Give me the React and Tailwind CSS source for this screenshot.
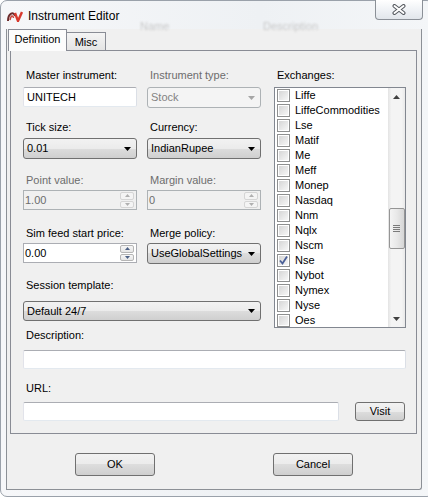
import React from 'react';

const exchanges = [
  'Liffe', 'LiffeCommodities', 'Lse', 'Matif', 'Me', 'Meff', 'Monep', 'Nasdaq',
  'Nnm', 'Nqlx', 'Nscm', 'Nse', 'Nybot', 'Nymex', 'Nyse', 'Oes',
];

function Arrow({ color = '#000', up = false }) {
  return (
    <svg width="7" height="4" viewBox="0 0 7 4">
      <path d={up ? 'M0 4 L3.5 0 L7 4 Z' : 'M0 0 L7 0 L3.5 4 Z'} fill={color} />
    </svg>
  );
}

function Label({ children, disabled, className = '' }) {
  return (
    <div className={`h-[16px] pl-[3px] leading-[16px] ${disabled ? 'text-[#6d6d6d]' : 'text-black'} ${className}`}>
      {children}
    </div>
  );
}

function Combo({ value, disabled, className = '' }) {
  return (
    <div
      className={`relative flex items-center rounded-[3px] border ${
        disabled
          ? 'border-[#adb2b5] bg-[#f4f4f4] text-[#838383]'
          : 'border-[#707070] bg-[linear-gradient(#f2f2f2,#ebebeb_50%,#dddddd_50%,#cfcfcf)] text-black'
      } ${className}`}
    >
      <span className="pl-[3px]">{value}</span>
      <span className="absolute right-[5px] top-1/2 -translate-y-1/2 flex">
        <Arrow color={disabled ? '#a6a6a6' : '#000'} />
      </span>
    </div>
  );
}

function TextBox({ value, className = '' }) {
  return (
    <div className={`flex items-center border border-[#abadb3] border-l-[#e2e3ea] border-r-[#dbdfe6] border-b-[#e3e9ef] bg-white rounded-[2px] pl-[3px] ${className}`}>
      {value}
    </div>
  );
}

function Numeric({ value, disabled }) {
  const btn = disabled
    ? 'border-[#d5d5d5] bg-[#f4f4f4]'
    : 'border-[#b5b5b5] bg-[linear-gradient(#f6f6f6,#e6e6e6)]';
  const arrow = disabled ? '#b0b0b0' : '#4d6185';
  return (
    <div
      className={`relative flex items-center h-[20px] w-[114px] border pl-[1px] ${
        disabled ? 'border-[#adb2b5] bg-[#f0f0f0] text-[#6d6d6d]' : 'border-[#abadb3] bg-white text-black'
      }`}
    >
      {value}
      <div className="absolute right-[2px] top-[1px] bottom-[1px] w-[14px] flex flex-col gap-[1px]">
        <div className={`flex-1 border rounded-[2px] flex items-center justify-center ${btn}`}>
          <svg width="5" height="3" viewBox="0 0 5 3"><path d="M0 3 L2.5 0 L5 3 Z" fill={arrow} /></svg>
        </div>
        <div className={`flex-1 border rounded-[2px] flex items-center justify-center ${btn}`}>
          <svg width="5" height="3" viewBox="0 0 5 3"><path d="M0 0 L5 0 L2.5 3 Z" fill={arrow} /></svg>
        </div>
      </div>
    </div>
  );
}

function WinButton({ children, className = '' }) {
  return (
    <div
      className={`flex items-center justify-center rounded-[3px] border border-[#707070] bg-[linear-gradient(#f2f2f2,#ebebeb_50%,#dddddd_50%,#cfcfcf)] text-black ${className}`}
    >
      {children}
    </div>
  );
}

function CheckBox({ checked }) {
  return (
    <div className="w-[13px] h-[13px] border border-[#8e8f8f] bg-white p-[1px] shrink-0">
      <div className="relative w-full h-full bg-[linear-gradient(135deg,#d6d6d6,#f6f6f6)]">
        {checked && (
          <svg className="absolute -left-[1px] -top-[1px]" width="11" height="11" viewBox="0 0 11 11">
            <path d="M2 5.5 L4.5 8.5 L9 1.5" fill="none" stroke="#4a5f97" strokeWidth="1.8" />
          </svg>
        )}
      </div>
    </div>
  );
}

function Logo() {
  return (
    <svg width="16" height="12" viewBox="0 0 16 12">
      <path d="M1 11 C1 3 7 1 8 6" fill="none" stroke="#6b2a2a" strokeWidth="2" />
      <path d="M3 10 C4 5 6 5 6.5 8" fill="none" stroke="#c8463e" strokeWidth="1.5" />
      <path d="M8 3 L11 11 L15 2" fill="none" stroke="#d83a2e" strokeWidth="2.4" />
    </svg>
  );
}

export default function App() {
  return (
    <div className="w-[428px] h-[500px] bg-white overflow-hidden font-['Liberation_Sans',Arial,sans-serif] text-[11px]">
      <div className="relative w-[434px] h-[497px] rounded-[7px] border border-[#9aa1aa] bg-[linear-gradient(90deg,#f6f7f9,#eef1f4_60%,#f4f6f8)]">
        {/* title bar */}
        <div className="h-[28px] flex items-center pl-[6px] pt-[1px] relative">
          <Logo />
          <span className="ml-[5px] text-[12px] text-black">Instrument Editor</span>
          <span className="absolute left-[139px] top-[17px] text-[#c8c8c8] blur-[1px]">Name</span>
          <span className="absolute left-[262px] top-[17px] text-[#c8c8c8] blur-[1px]">Description</span>
          <div className="absolute -top-[1px] left-[374px] w-[48px] h-[20px] rounded-b-[4px] border border-t-0 border-[#8b9097] bg-[linear-gradient(#ffffff,#edf0f4_60%,#e2e6eb)] flex items-center justify-center">
            <svg width="14" height="11" viewBox="0 0 14 11">
              <path d="M2.5 2 L11.5 9 M11.5 2 L2.5 9" stroke="#55595f" strokeWidth="4" strokeLinecap="round" />
              <path d="M2.5 2 L11.5 9 M11.5 2 L2.5 9" stroke="#ffffff" strokeWidth="2" strokeLinecap="round" />
            </svg>
          </div>
        </div>

        {/* client area */}
        <div className="ml-[5px] w-[416px] h-[461px] border-l border-r border-b border-[#8c9096] bg-[#f0f0f0] rounded-br-[3px]">
          {/* tabs */}
          <div className="flex items-end h-[21px] pl-[1px]">
            <div className="relative z-10 h-[22px] w-[59px] -mb-[1px] border border-b-0 border-[#898c95] bg-[#fcfcfc] flex items-center justify-center pb-[2px]">
              Definition
            </div>
            <div className="h-[18px] w-[39px] border border-l-0 border-b-0 border-[#898c95] bg-[linear-gradient(#f4f4f4,#e4e4e4)] flex items-center justify-center pt-[1px]">
              Misc
            </div>
          </div>

          {/* tab page */}
          <div className="ml-[3px] w-[407px] h-[384px] border border-[#898c95] bg-[#f0f0f0] pl-[12px] pt-[16px]">
            <div className="flex">
              <div className="w-[238px]">
                <div className="flex gap-[10px]">
                  <div className="w-[114px]">
                    <Label>Master instrument:</Label>
                    <TextBox value="UNITECH" className="mt-[4px] h-[20px]" />
                  </div>
                  <div className="w-[114px]">
                    <Label disabled>Instrument type:</Label>
                    <Combo value="Stock" disabled className="mt-[4px] h-[21px]" />
                  </div>
                </div>
                <div className="flex gap-[10px] mt-[11px]">
                  <div className="w-[114px]">
                    <Label>Tick size:</Label>
                    <Combo value="0.01" className="mt-[3px] h-[21px]" />
                  </div>
                  <div className="w-[114px]">
                    <Label>Currency:</Label>
                    <Combo value="IndianRupee" className="mt-[3px] h-[21px]" />
                  </div>
                </div>
                <div className="flex gap-[10px] mt-[13px]">
                  <div className="w-[114px]">
                    <Label disabled>Point value:</Label>
                    <div className="mt-[2px]"><Numeric value="1.00" disabled /></div>
                  </div>
                  <div className="w-[114px]">
                    <Label disabled>Margin value:</Label>
                    <div className="mt-[2px]"><Numeric value="0" disabled /></div>
                  </div>
                </div>
                <div className="flex gap-[10px] mt-[15px]">
                  <div className="w-[114px]">
                    <Label>Sim feed start price:</Label>
                    <div className="mt-[2px]"><Numeric value="0.00" /></div>
                  </div>
                  <div className="w-[114px]">
                    <Label>Merge policy:</Label>
                    <Combo value="UseGlobalSettings" className="mt-[2px] h-[21px]" />
                  </div>
                </div>
                <Label className="mt-[13px]">Session template:</Label>
                <Combo value="Default 24/7" className="mt-[8px] h-[20px] w-[238px]" />
              </div>

              <div className="ml-[13px] w-[132px]">
                <Label>Exchanges:</Label>
                <div className="relative mt-[4px] h-[241px] border border-[#828790] bg-white overflow-hidden">
                  <div className="pl-[2px]">
                    {exchanges.map((name) => (
                      <div key={name} className="h-[15px] flex items-center">
                        <CheckBox checked={name === 'Nse'} />
                        <span className="ml-[5px] text-black">{name}</span>
                      </div>
                    ))}
                  </div>
                  {/* scrollbar */}
                  <div className="absolute right-0 top-0 bottom-0 w-[17px] bg-[linear-gradient(90deg,#e3e3e3,#f4f4f4_20%,#f4f4f4_80%,#e9e9e9)] flex flex-col items-center">
                    <div className="h-[17px] flex items-center justify-center">
                      <Arrow up color="#404040" />
                    </div>
                    <div className="mt-[103px] w-[16px] h-[41px] rounded-[2px] border border-[#959595] bg-[linear-gradient(90deg,#f4f4f4,#e8e8e8_50%,#d6d6d6)] flex flex-col items-center justify-center gap-[1px]">
                      <div className="w-[7px] h-[1px] bg-[#7a7a7a]" />
                      <div className="w-[7px] h-[1px] bg-[#7a7a7a]" />
                      <div className="w-[7px] h-[1px] bg-[#7a7a7a]" />
                      <div className="w-[7px] h-[1px] bg-[#7a7a7a]" />
                    </div>
                    <div className="mt-auto h-[17px] flex items-center justify-center">
                      <Arrow color="#404040" />
                    </div>
                  </div>
                </div>
              </div>
            </div>

            <Label className="-mt-[1px]">Description:</Label>
            <TextBox className="mt-[7px] h-[19px] w-[383px]" />
            <Label className="mt-[11px]">URL:</Label>
            <div className="flex items-center mt-[6px]">
              <TextBox className="h-[19px] w-[316px]" />
              <WinButton className="ml-[16px] w-[50px] h-[19px]">Visit</WinButton>
            </div>
          </div>

          {/* bottom buttons */}
          <div className="flex mt-[19px] pl-[68px]">
            <WinButton className="w-[80px] h-[23px]">OK</WinButton>
            <WinButton className="ml-[118px] w-[80px] h-[23px]">Cancel</WinButton>
          </div>
        </div>
      </div>
    </div>
  );
}
